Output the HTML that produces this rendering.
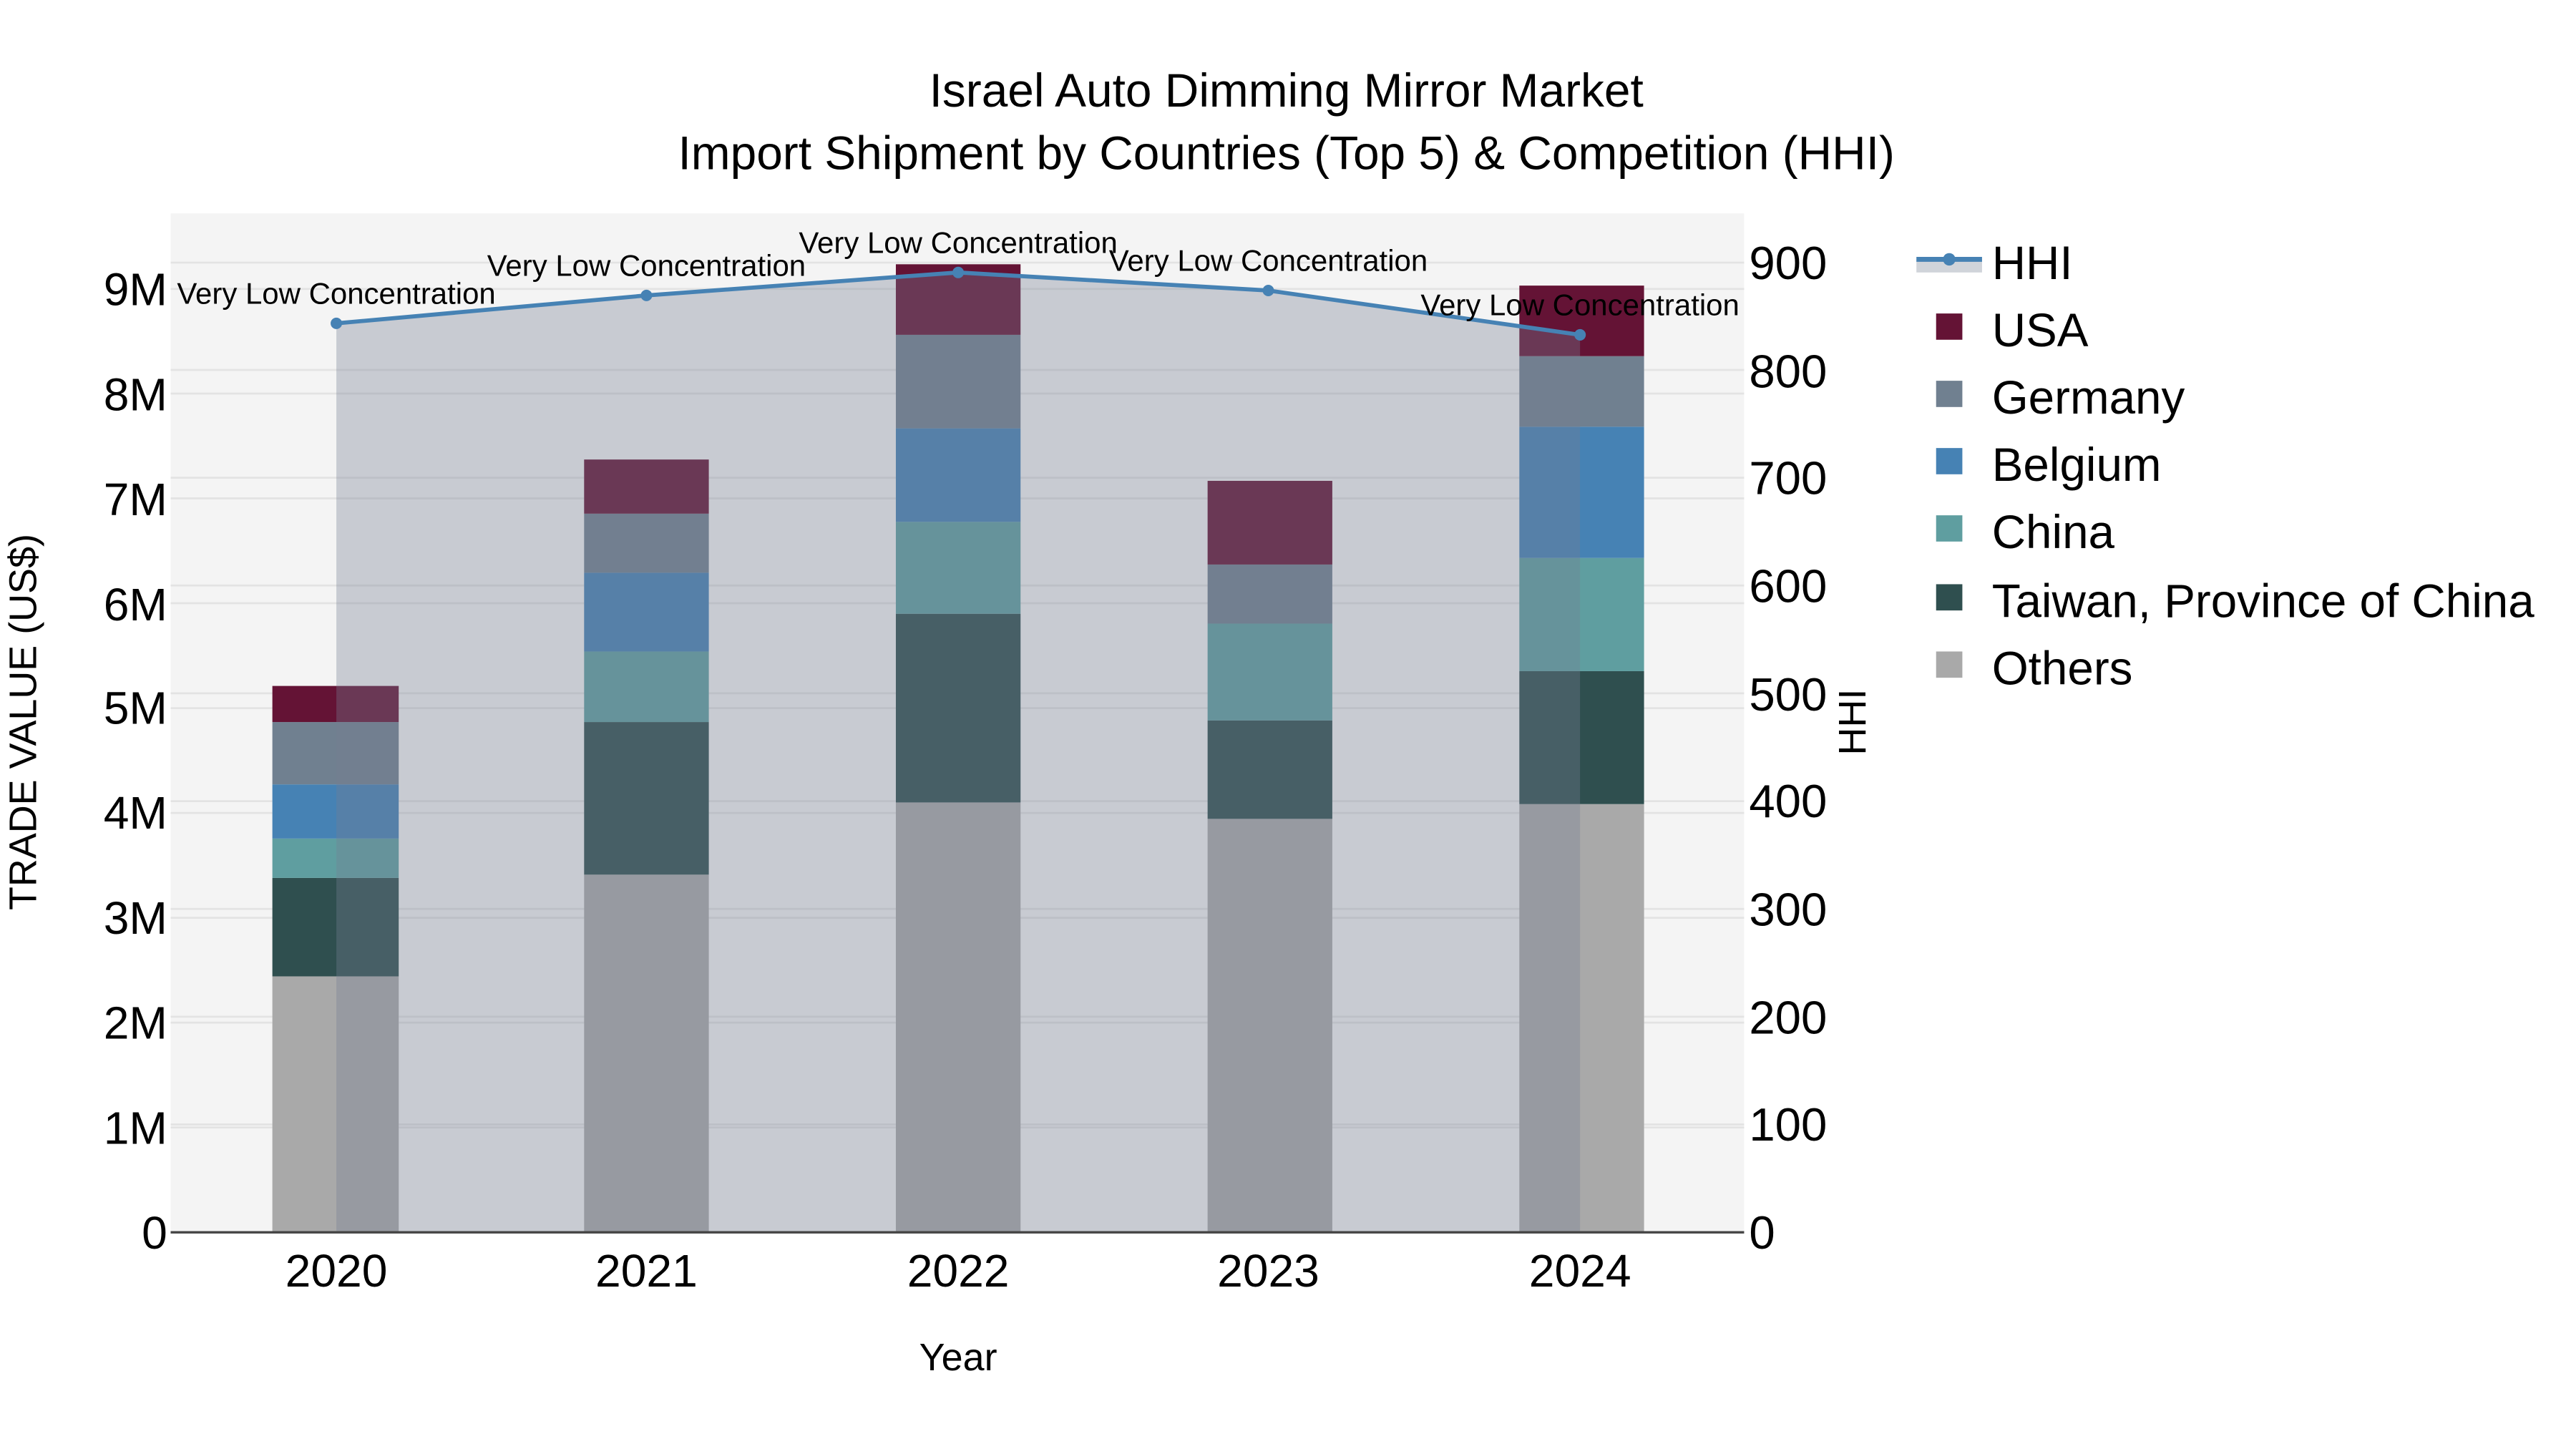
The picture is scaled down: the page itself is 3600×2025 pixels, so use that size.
<!DOCTYPE html>
<html><head><meta charset="utf-8"><style>
html,body{margin:0;padding:0;background:#fff;}
svg{display:block;}
text{font-family:"Liberation Sans",sans-serif;fill:#000;}
</style></head><body>
<svg width="3600" height="2025" viewBox="0 0 1570 883" xmlns="http://www.w3.org/2000/svg">
<rect x="0" y="0" width="1570" height="883" fill="#fff"/>
<rect x="104" y="130" width="959" height="621" fill="#f4f4f4"/>
<g stroke="#e3e3e3" stroke-width="1.2">
<line x1="104" x2="1063" y1="687.1" y2="687.1"/><line x1="104" x2="1063" y1="623.2" y2="623.2"/>
<line x1="104" x2="1063" y1="559.3" y2="559.3"/><line x1="104" x2="1063" y1="495.4" y2="495.4"/>
<line x1="104" x2="1063" y1="431.5" y2="431.5"/><line x1="104" x2="1063" y1="367.6" y2="367.6"/>
<line x1="104" x2="1063" y1="303.7" y2="303.7"/><line x1="104" x2="1063" y1="239.8" y2="239.8"/>
<line x1="104" x2="1063" y1="176" y2="176"/>
<line x1="104" x2="1063" y1="685.3" y2="685.3"/><line x1="104" x2="1063" y1="619.6" y2="619.6"/>
<line x1="104" x2="1063" y1="553.9" y2="553.9"/><line x1="104" x2="1063" y1="488.2" y2="488.2"/>
<line x1="104" x2="1063" y1="422.5" y2="422.5"/><line x1="104" x2="1063" y1="356.8" y2="356.8"/>
<line x1="104" x2="1063" y1="291.1" y2="291.1"/><line x1="104" x2="1063" y1="225.4" y2="225.4"/>
<line x1="104" x2="1063" y1="160" y2="160"/>
</g>
<g>
<rect x="166" width="77" y="595" height="156" fill="#a9a9a9"/>
<rect x="166" width="77" y="535" height="60" fill="#2f4f4f"/>
<rect x="166" width="77" y="511" height="24" fill="#5f9ea0"/>
<rect x="166" width="77" y="478" height="33" fill="#4682b4"/>
<rect x="166" width="77" y="440" height="38" fill="#708090"/>
<rect x="166" width="77" y="418" height="22" fill="#641335"/>

<rect x="356" width="76" y="533" height="218" fill="#a9a9a9"/>
<rect x="356" width="76" y="440" height="93" fill="#2f4f4f"/>
<rect x="356" width="76" y="397" height="43" fill="#5f9ea0"/>
<rect x="356" width="76" y="349" height="48" fill="#4682b4"/>
<rect x="356" width="76" y="313" height="36" fill="#708090"/>
<rect x="356" width="76" y="280" height="33" fill="#641335"/>

<rect x="546" width="76" y="489" height="262" fill="#a9a9a9"/>
<rect x="546" width="76" y="374" height="115" fill="#2f4f4f"/>
<rect x="546" width="76" y="318" height="56" fill="#5f9ea0"/>
<rect x="546" width="76" y="261" height="57" fill="#4682b4"/>
<rect x="546" width="76" y="204" height="57" fill="#708090"/>
<rect x="546" width="76" y="161" height="43" fill="#641335"/>

<rect x="736" width="76" y="499" height="252" fill="#a9a9a9"/>
<rect x="736" width="76" y="439" height="60" fill="#2f4f4f"/>
<rect x="736" width="76" y="380" height="59" fill="#5f9ea0"/>
<rect x="736" width="76" y="344" height="36" fill="#708090"/>
<rect x="736" width="76" y="293" height="51" fill="#641335"/>

<rect x="926" width="76" y="490" height="261" fill="#a9a9a9"/>
<rect x="926" width="76" y="409" height="81" fill="#2f4f4f"/>
<rect x="926" width="76" y="340" height="69" fill="#5f9ea0"/>
<rect x="926" width="76" y="260" height="80" fill="#4682b4"/>
<rect x="926" width="76" y="217" height="43" fill="#708090"/>
<rect x="926" width="76" y="174" height="43" fill="#641335"/>
</g>
<polygon points="205,197 394,180 584,166 773,177 963,204 963,751 205,751" fill="rgb(118,126,147)" fill-opacity="0.35"/>
<polyline points="205,197 394,180 584,166 773,177 963,204" fill="none" stroke="#4682b4" stroke-width="2.5"/>
<g fill="#4682b4">
<circle cx="205" cy="197" r="3.5"/><circle cx="394" cy="180" r="3.5"/><circle cx="584" cy="166" r="3.5"/><circle cx="773" cy="177" r="3.5"/><circle cx="963" cy="204" r="3.5"/>
</g>
<g font-size="18.3" text-anchor="middle">
<text x="205" y="185">Very Low Concentration</text>
<text x="394" y="168">Very Low Concentration</text>
<text x="584" y="154">Very Low Concentration</text>
<text x="773" y="165">Very Low Concentration</text>
<text x="963" y="192">Very Low Concentration</text>
</g>
<line x1="104" x2="1063" y1="751" y2="751" stroke="#444" stroke-width="1.5"/>
<g font-size="28" text-anchor="end">
<text x="102" y="761">0</text><text x="102" y="697">1M</text><text x="102" y="633">2M</text>
<text x="102" y="569">3M</text><text x="102" y="505">4M</text><text x="102" y="441">5M</text>
<text x="102" y="378">6M</text><text x="102" y="314">7M</text><text x="102" y="250">8M</text>
<text x="102" y="186">9M</text>
</g>
<g font-size="28.5" text-anchor="start">
<text x="1066" y="761">0</text><text x="1066" y="695">100</text><text x="1066" y="630">200</text>
<text x="1066" y="564">300</text><text x="1066" y="498">400</text><text x="1066" y="433">500</text>
<text x="1066" y="367">600</text><text x="1066" y="301">700</text><text x="1066" y="236">800</text>
<text x="1066" y="170">900</text>
</g>
<g font-size="28" text-anchor="middle">
<text x="205" y="784">2020</text><text x="394" y="784">2021</text><text x="584" y="784">2022</text>
<text x="773" y="784">2023</text><text x="963" y="784">2024</text>
</g>
<text x="584" y="835" font-size="23.5" text-anchor="middle">Year</text>
<text transform="translate(22,440) rotate(-90)" font-size="23.5" text-anchor="middle">TRADE VALUE (US$)</text>
<text transform="translate(1137,440) rotate(-90)" font-size="23.5" text-anchor="middle">HHI</text>
<text x="784" y="65" font-size="28.7" text-anchor="middle">Israel Auto Dimming Mirror Market</text>
<text x="784" y="103" font-size="28.7" text-anchor="middle">Import Shipment by Countries (Top 5) &amp; Competition (HHI)</text>
<rect x="1168" y="158" width="40" height="8" fill="#d0d4da"/>
<line x1="1168" x2="1208" y1="158" y2="158" stroke="#4682b4" stroke-width="3"/>
<circle cx="1188" cy="158" r="3.8" fill="#4682b4"/>
<rect x="1180" y="191" width="16" height="16" fill="#641335"/>
<rect x="1180" y="232" width="16" height="16" fill="#708090"/>
<rect x="1180" y="273" width="16" height="16" fill="#4682b4"/>
<rect x="1180" y="314" width="16" height="16" fill="#5f9ea0"/>
<rect x="1180" y="356" width="16" height="16" fill="#2f4f4f"/>
<rect x="1180" y="397" width="16" height="16" fill="#a9a9a9"/>
<g font-size="28.6">
<text x="1214" y="170">HHI</text>
<text x="1214" y="211">USA</text>
<text x="1214" y="252">Germany</text>
<text x="1214" y="293">Belgium</text>
<text x="1214" y="334">China</text>
<text x="1214" y="376">Taiwan, Province of China</text>
<text x="1214" y="417">Others</text>
</g>
</svg>
</body></html>
